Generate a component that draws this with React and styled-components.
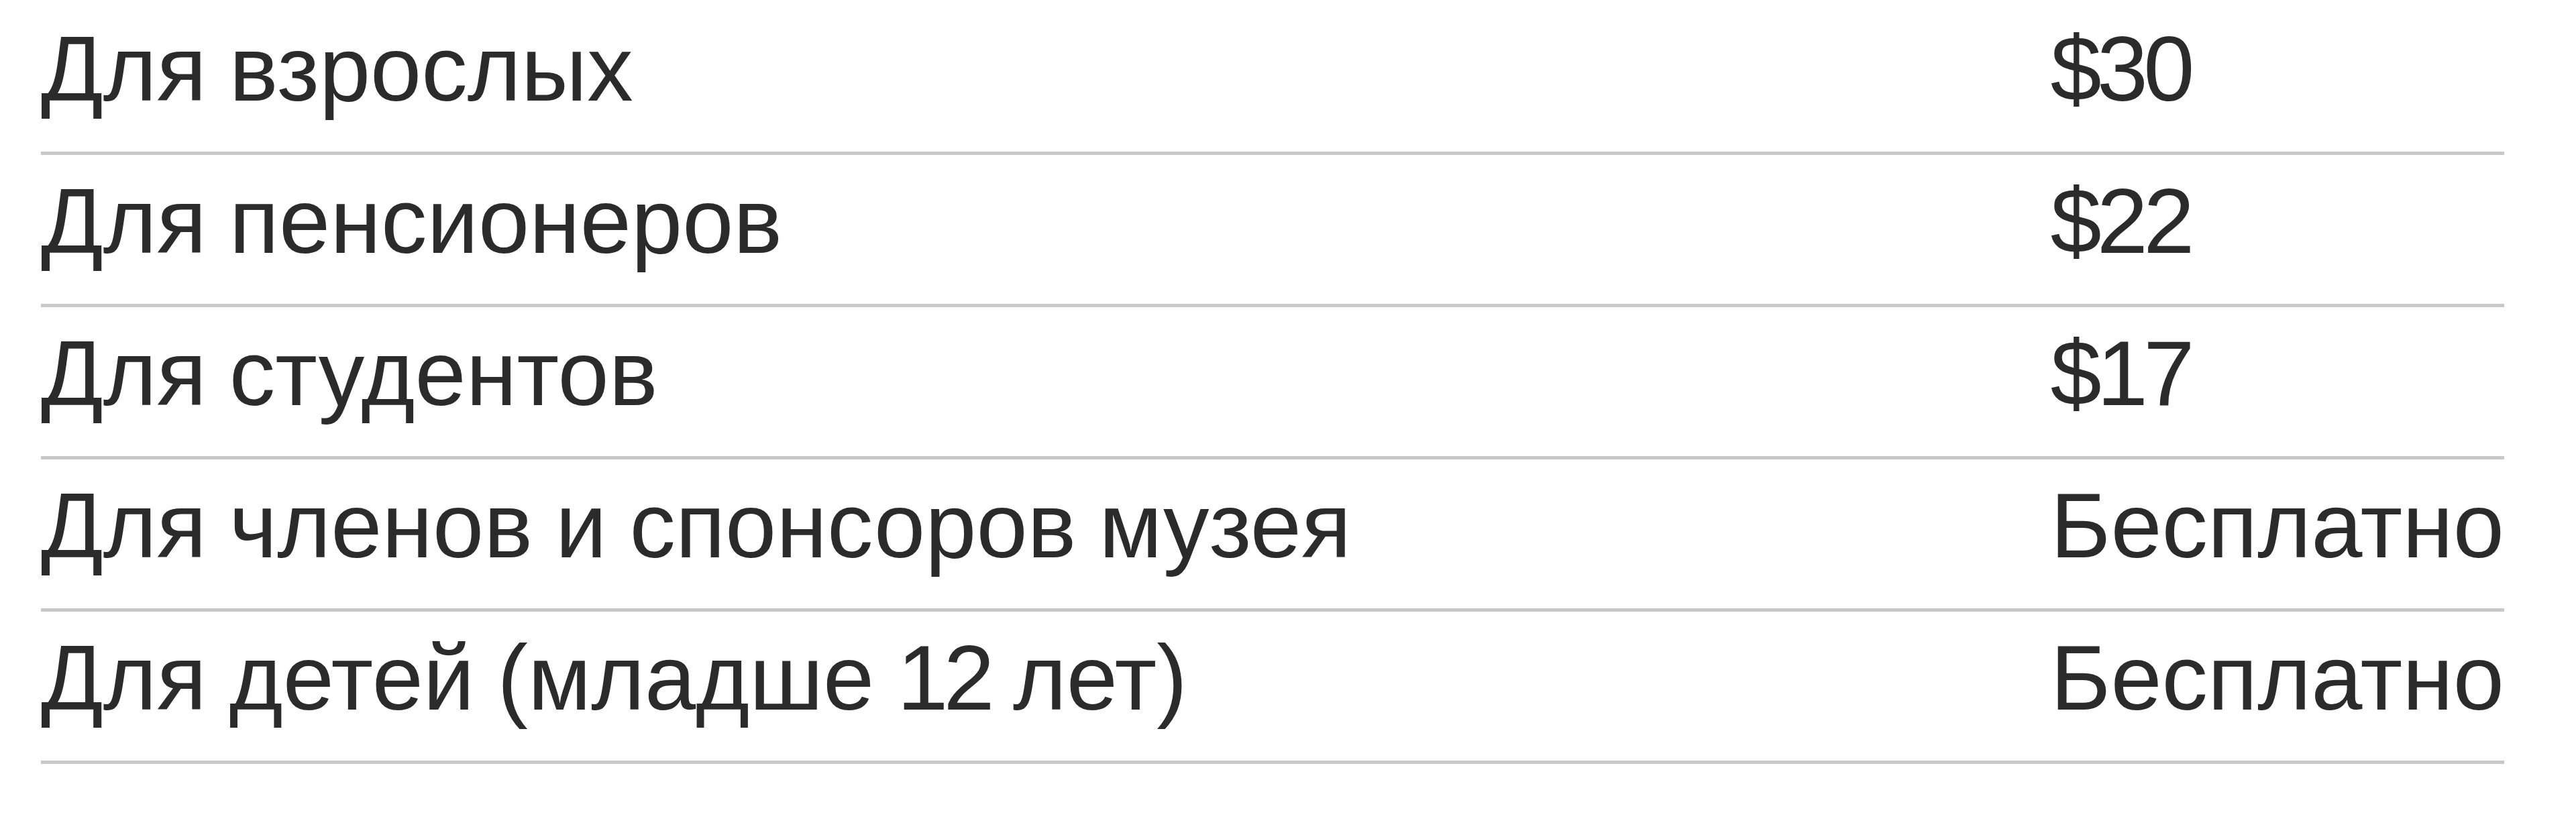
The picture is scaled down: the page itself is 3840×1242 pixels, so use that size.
import React from 'react';
import styled, { createGlobalStyle } from 'styled-components';

const GlobalStyle = createGlobalStyle`
    html, body {
        margin: 0;
        padding: 0;
        background: #fff;
    }
`;

const StyledWrapper = styled.div`
    padding: 4px 107px 0 61px;
    font-family: "Liberation Sans", Arial, sans-serif;
    color: #2b2b2b;
`;

const StyledTable = styled.div`
    display: grid;
    grid-template-columns: 1fr max-content;
`;

const StyledCell = styled.div`
    font-size: 137px;
    line-height: 157px;
    word-spacing: -0.03em;
    padding: 20px 0 45px;
    border-bottom: 5px solid #c8c8c8;
    white-space: nowrap;
`;

// digits in the original face are narrow
const StyledNum = styled.span`
    letter-spacing: -0.05em;
`;

const withNums = text =>
    text.split(/([$\d]+)/).map((part, i) =>
        /[$\d]/.test(part) ? <StyledNum key={i}>{part}</StyledNum> : part
    );

const prices = [
    { label: 'Для взрослых', price: '$30' },
    { label: 'Для пенсионеров', price: '$22' },
    { label: 'Для студентов', price: '$17' },
    { label: 'Для членов и спонсоров музея', price: 'Бесплатно' },
    { label: 'Для детей (младше 12 лет)', price: 'Бесплатно' }
];

const App = () => (
    <>
        <GlobalStyle />
        <StyledWrapper>
            <StyledTable>
                {prices.map(item => (
                    <React.Fragment key={item.label}>
                        <StyledCell>{withNums(item.label)}</StyledCell>
                        <StyledCell>{withNums(item.price)}</StyledCell>
                    </React.Fragment>
                ))}
            </StyledTable>
        </StyledWrapper>
    </>
);

export default App;
